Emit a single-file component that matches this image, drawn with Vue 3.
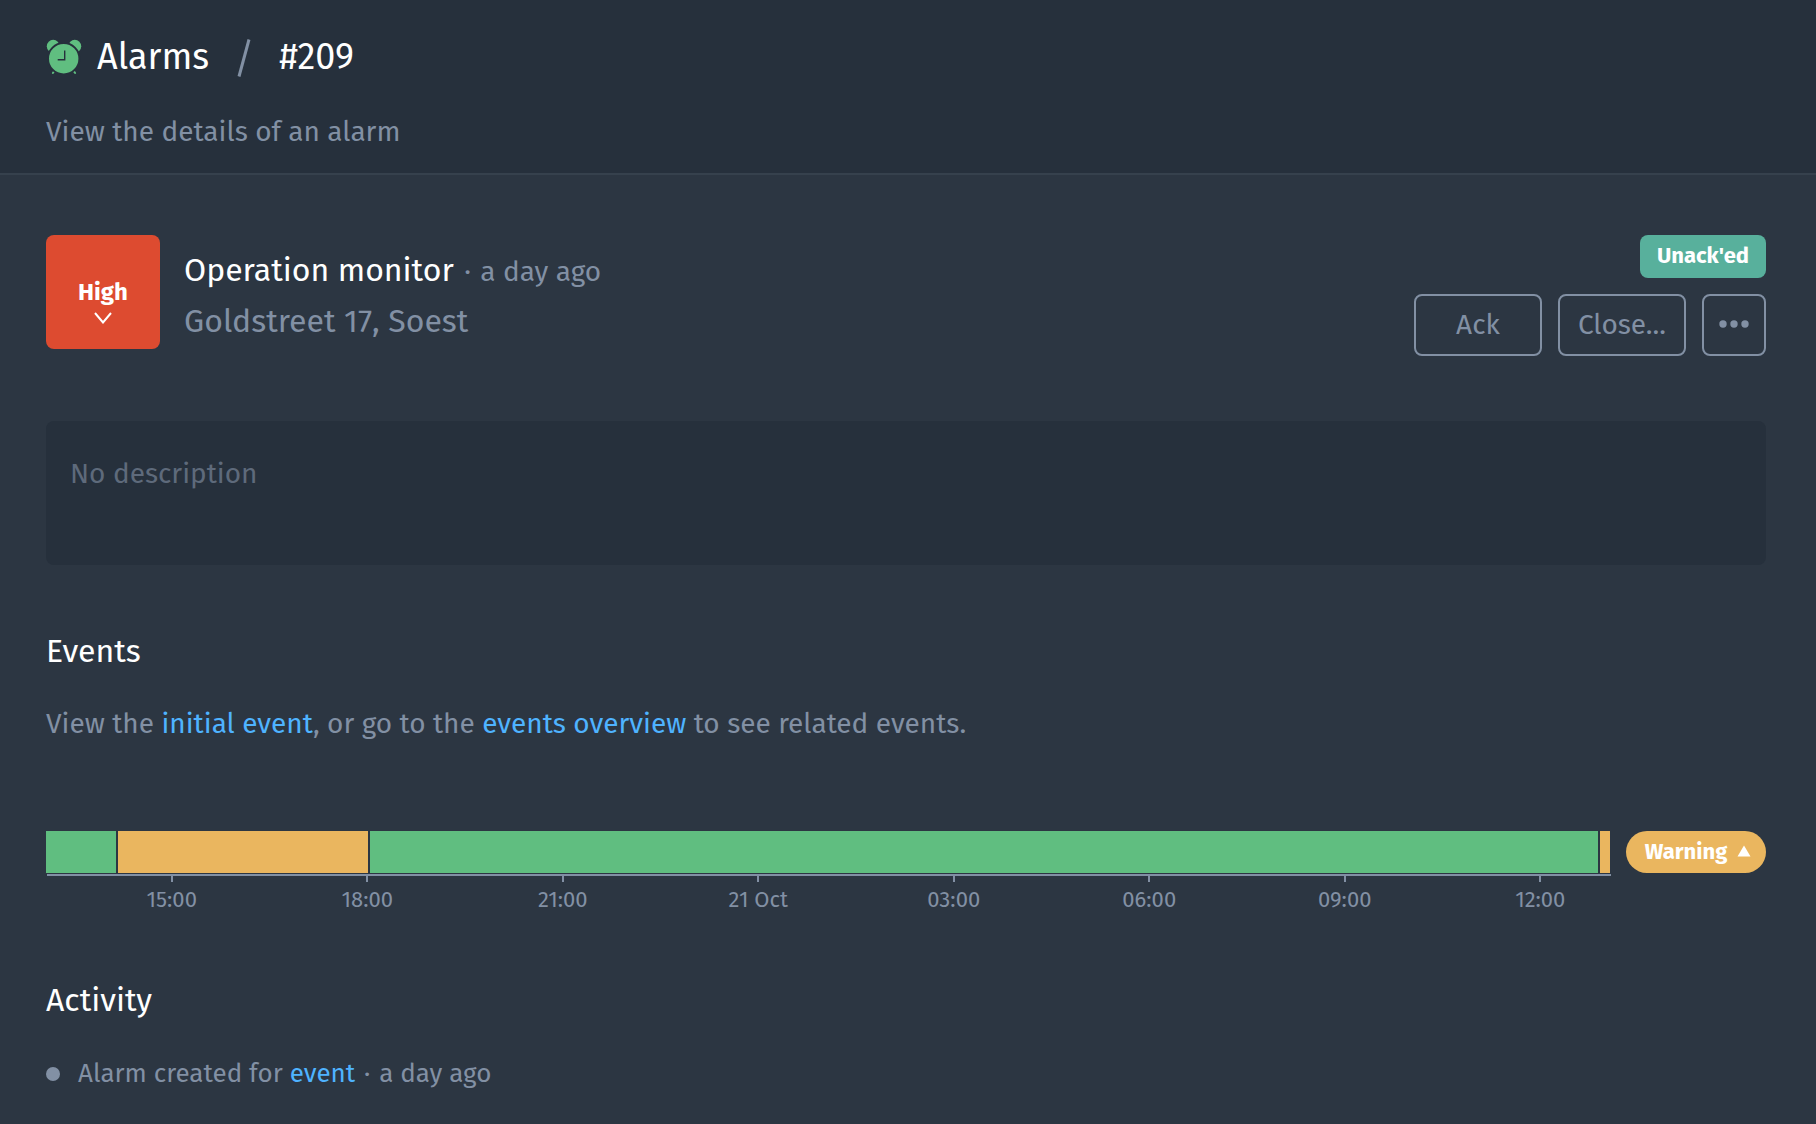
<template>
  <div class="page">
    <header class="page-header">
      <h1 class="breadcrumb">
        <svg class="breadcrumb-icon" viewBox="0 0 36 36" aria-hidden="true">
          <circle cx="7.2" cy="7.2" r="6.4" fill="#60be80" />
          <circle cx="28.8" cy="7.2" r="6.4" fill="#60be80" />
          <path d="M8.6 31.6 6.9 34M27.4 31.6l1.7 2.4" stroke="#60be80" stroke-width="2" stroke-linecap="round" />
          <circle cx="17.7" cy="19.7" r="15.7" fill="#60be80" stroke="#26303c" stroke-width="2" />
          <path d="M18.7 11.5v9.3h-7" fill="none" stroke="#26303c" stroke-width="1.4" />
        </svg>
        <span>Alarms</span>
        <svg class="breadcrumb-slash" viewBox="0 0 14 38" aria-hidden="true">
          <path d="M12 .5 2 37.5" stroke="#8290a4" stroke-width="3" />
        </svg>
        <span>#209</span>
      </h1>
      <p class="page-subtitle">View the details of an alarm</p>
    </header>

    <main class="page-content">
      <section class="alarm">
        <button class="priority" type="button">
          <span>High</span>
          <svg class="priority-icon" viewBox="0 0 18 12" aria-hidden="true">
            <path d="M1 1l8 9.5L17 1" fill="none" stroke="#fff" stroke-width="2" />
          </svg>
        </button>
        <div class="alarm-info">
          <h2 class="alarm-title">
            Operation monitor
            <span class="alarm-time"><span class="dot">·</span> a day ago</span>
          </h2>
          <p class="alarm-location">Goldstreet 17, Soest</p>
        </div>
        <div class="alarm-side">
          <span class="status">Unack'ed</span>
          <div class="actions">
            <button class="btn" type="button">Ack</button>
            <button class="btn" type="button">Close...</button>
            <button class="btn btn-icon" type="button" aria-label="More actions">
              <svg class="more-icon" viewBox="0 0 30 8" aria-hidden="true">
                <circle v-for="x in [4, 15, 26]" :key="x" :cx="x" cy="4" r="3.7" fill="#8290a4" />
              </svg>
            </button>
          </div>
        </div>
      </section>

      <section class="description">No description</section>

      <section>
        <h3 class="section-title">Events</h3>
        <p class="section-text">
          View the <a href="#initial">initial event</a>, or go to the
          <a href="#events">events overview</a> to see related events.
        </p>
        <div class="timeline">
          <div class="timeline-chart">
            <div class="timeline-bar">
              <span
                v-for="(segment, index) in segments"
                :key="index"
                class="segment"
                :class="segment.state"
                :style="{ flexGrow: segment.size }"
              ></span>
            </div>
            <ol class="timeline-axis">
              <li v-for="label in ticks" :key="label" class="tick">{{ label }}</li>
            </ol>
          </div>
          <button class="state-pill" type="button">
            <span>Warning</span>
            <svg class="state-icon" viewBox="0 0 14 12" aria-hidden="true">
              <path d="M7 .5 13.5 11.5H.5z" fill="#fff" />
            </svg>
          </button>
        </div>
      </section>

      <section>
        <h3 class="section-title">Activity</h3>
        <ul class="activity">
          <li class="activity-item">
            <span class="activity-dot" aria-hidden="true"></span>
            <span>Alarm created for <a href="#event">event</a> <span class="dot">·</span> a day ago</span>
          </li>
        </ul>
      </section>
    </main>
  </div>
</template>

<script setup>
const segments = [
  { state: 'normal', size: 70 },
  { state: 'warning', size: 250 },
  { state: 'normal', size: 1228 },
  { state: 'warning', size: 10 }
];

const ticks = ['15:00', '18:00', '21:00', '21 Oct', '03:00', '06:00', '09:00', '12:00'];
</script>

<style>
body {
  margin: 0;
  background: #2c3642;
}
</style>

<style scoped>
.page {
  min-height: 100vh;
  background: #2c3642;
  color: #8290a4;
  font-family: "Fira Sans", "Noto Sans", sans-serif;
  font-size: 28px;
  line-height: 40px;
}

h1,
h2,
h3,
p,
ol,
ul {
  margin: 0;
  padding: 0;
  font-weight: 400;
  list-style: none;
}

a {
  color: #4fb3ff;
  text-decoration: none;
}

button {
  font-family: inherit;
  cursor: pointer;
}

.page-header {
  padding: 33px 46px 21px;
  border-bottom: 2px solid #36414d;
  background: #26303c;
}

.breadcrumb {
  display: flex;
  align-items: center;
  color: #fff;
  font-size: 36px;
  line-height: 48px;
}

.breadcrumb-icon {
  width: 36px;
  height: 36px;
  margin-right: 15px;
}

.breadcrumb-slash {
  width: 14px;
  height: 38px;
  margin: 2px 28px 0;
}

.page-subtitle {
  margin-top: 31px;
}

.page-content {
  padding: 60px 50px 32px 46px;
}

.dot {
  margin: 0 2px;
}

.alarm {
  display: flex;
  align-items: flex-start;
}

.priority {
  display: flex;
  flex-direction: column;
  align-items: center;
  width: 114px;
  height: 114px;
  padding: 40px 0 0;
  border: 0;
  border-radius: 8px;
  background: #dd4b30;
  color: #fff;
  font-size: 24px;
  font-weight: 700;
  line-height: 34px;
}

.priority-icon {
  width: 18px;
  height: 12px;
  margin-top: 3px;
}

.alarm-info {
  flex: 1;
  margin-left: 24px;
  padding-top: 10px;
}

.alarm-title {
  color: #fff;
  font-size: 32px;
  line-height: 51px;
}

.alarm-time {
  color: #8290a4;
  font-size: 28px;
  line-height: 28px;
}

.alarm-location {
  font-size: 32px;
  line-height: 51px;
}

.alarm-side {
  display: flex;
  flex-direction: column;
  align-items: flex-end;
  gap: 16px;
}

.status {
  padding: 0 17px 2px;
  border-radius: 8px;
  background: #58b09c;
  color: #fff;
  font-size: 22px;
  font-weight: 700;
  line-height: 41px;
}

.actions {
  display: flex;
  gap: 16px;
}

.btn {
  display: flex;
  align-items: center;
  justify-content: center;
  width: 128px;
  height: 62px;
  padding: 0 0 2px;
  border: 2px solid #8290a4;
  border-radius: 8px;
  background: transparent;
  color: #8290a4;
  font-size: 28px;
}

.btn-icon {
  width: 64px;
}

.more-icon {
  width: 30px;
  height: 8px;
}

.description {
  min-height: 79px;
  margin: 65px 0 62px;
  padding: 33px 24px 32px;
  border-radius: 8px;
  background: #26303c;
  color: #5e6a7b;
}

.section-title {
  color: #fff;
  font-size: 32px;
  line-height: 48px;
}

.section-text {
  margin-top: 29px;
}

.timeline {
  display: flex;
  align-items: flex-start;
  gap: 16px;
  margin: 87px 0 58px;
}

.timeline-chart {
  flex: 1;
}

.timeline-bar {
  display: flex;
  gap: 2px;
  height: 42px;
}

.segment {
  flex: 0 0 0;
}

.segment.normal {
  background: #60be80;
}

.segment.warning {
  background: #eab65f;
}

.timeline-axis {
  display: flex;
  margin: 1px -1px 0 1px;
  padding-left: 27px;
  border-top: 2px solid #8290a4;
}

/* the last tick's cell runs past the end of the axis */
.timeline-axis::after {
  content: "";
  margin-right: -27px;
}

.tick {
  display: flex;
  flex: 1;
  flex-direction: column;
  align-items: center;
  font-size: 22px;
  line-height: 36px;
}

.tick::before {
  content: "";
  width: 2px;
  height: 6px;
  background: #8290a4;
}

.state-pill {
  display: flex;
  align-items: center;
  justify-content: center;
  gap: 10px;
  width: 140px;
  height: 42px;
  padding: 0 0 2px 4px;
  border: 0;
  border-radius: 21px;
  background: #eab65f;
  color: #fff;
  font-size: 22px;
  font-weight: 700;
}

.state-icon {
  width: 14px;
  height: 12px;
}

.activity {
  margin-top: 30px;
  font-size: 26px;
  line-height: 40px;
}

.activity-item {
  display: flex;
  align-items: center;
  gap: 18px;
}

.activity-dot {
  width: 14px;
  height: 14px;
  border-radius: 50%;
  background: #8290a4;
}
</style>
